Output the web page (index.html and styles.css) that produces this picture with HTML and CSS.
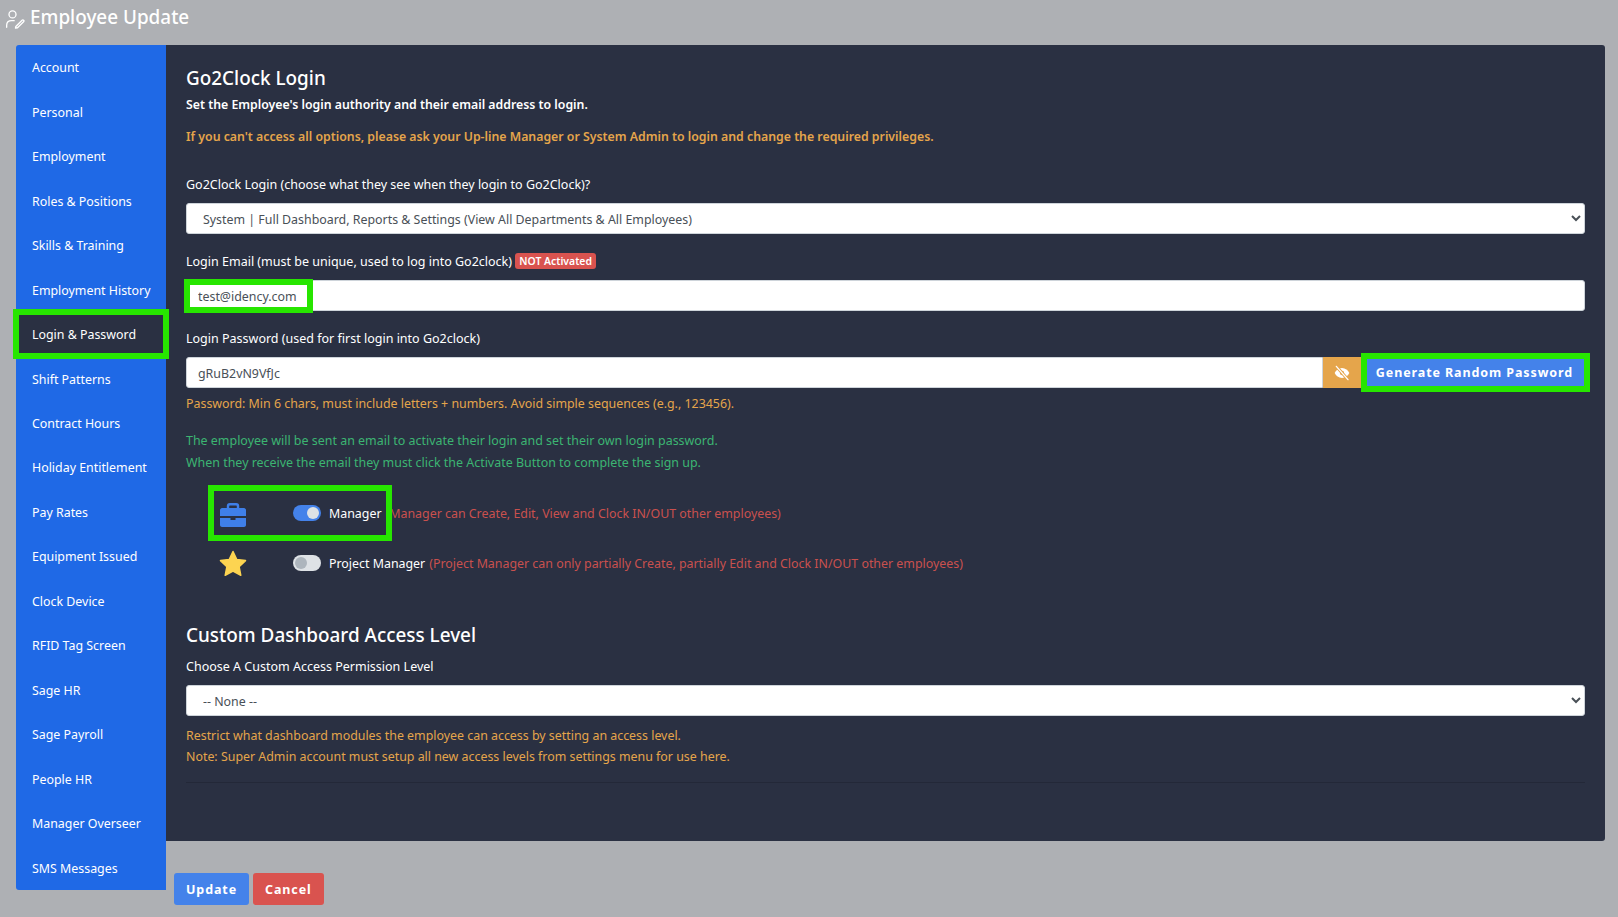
FILE: index.html
```html
<!DOCTYPE html>
<html lang="en">
<head>
    <meta charset="UTF-8">
    <title>Employee Update</title>
    <link rel="stylesheet" href="styles.css">
</head>
<body>
    <div class="page-title">
        <svg class="title-icon" viewBox="0 0 24 24" fill="none" stroke="#fff" stroke-width="1.6" stroke-linecap="round" stroke-linejoin="round">
            <circle cx="9" cy="6.5" r="4.2"/>
            <path d="M2 22v-2.5C2 16 4.5 14 8 14h3"/>
            <path d="M13 21l7.500-7.500c1.200-1.200 3 .6 1.800 1.800L15 22.500l-2.400.4z"/>
        </svg>
        <span>Employee Update</span>
    </div>

    <div class="layout">
        <div class="side-col">
            <ul class="side-nav">
                <li>Account</li>
                <li>Personal</li>
                <li>Employment</li>
                <li>Roles &amp; Positions</li>
                <li>Skills &amp; Training</li>
                <li>Employment History</li>
                <li class="active">Login &amp; Password</li>
                <li>Shift Patterns</li>
                <li>Contract Hours</li>
                <li>Holiday Entitlement</li>
                <li>Pay Rates</li>
                <li>Equipment Issued</li>
                <li>Clock Device</li>
                <li>RFID Tag Screen</li>
                <li>Sage HR</li>
                <li>Sage Payroll</li>
                <li>People HR</li>
                <li>Manager Overseer</li>
                <li>SMS Messages</li>
            </ul>
        </div>

        <div class="main-col">
            <div class="panel">
                <h2>Go2Clock Login</h2>
                <p class="intro">Set the Employee's login authority and their email address to login.</p>
                <p class="warn">If you can't access all options, please ask your Up-line Manager or System Admin to login and change the required privileges.</p>

                <label class="field-label first-label">Go2Clock Login (choose what they see when they login to Go2Clock)?</label>
                <select class="control">
                    <option>System | Full Dashboard, Reports &amp; Settings (View All Departments &amp; All Employees)</option>
                </select>

                <label class="field-label">Login Email (must be unique, used to log into Go2clock) <span class="badge">NOT Activated</span></label>
                <div class="email-wrap">
                    <input class="control" type="text" value="test@idency.com">
                    <span class="mark mark-email"></span>
                </div>

                <label class="field-label">Login Password (used for first login into Go2clock)</label>
                <div class="input-group">
                    <input class="control" type="text" value="gRuB2vN9VfJc">
                    <span class="eye-btn">
                        <svg viewBox="0 0 24 24" width="16" height="16" fill="#fff">
                            <path d="M12 4.500c-5 0-9 3.600-11 7.500 2 3.900 6 7.500 11 7.500s9-3.600 11-7.500c-2-3.900-6-7.500-11-7.500z"/>
                            <circle cx="12" cy="12" r="3.200" fill="#e5a54b"/>
                            <path d="M4 2.500L20.500 21.500" stroke="#e5a54b" stroke-width="4.500"/>
                            <path d="M3.500 2L21 22" stroke="#fff" stroke-width="2" stroke-linecap="round"/>
                        </svg>
                    </span>
                    <button class="btn btn-blue gen-btn" type="button">Generate Random Password</button>
                </div>
                <p class="help-orange pw-help">Password: Min 6 chars, must include letters + numbers. Avoid simple sequences (e.g., 123456).</p>

                <p class="help-green">The employee will be sent an email to activate their login and set their own login password.<br>When they receive the email they must click the Activate Button to complete the sign up.</p>

                <div class="perm-row manager-row">
                    <span class="perm-icon briefcase">
                        <svg viewBox="0 0 28 24" width="28" height="24">
                            <path d="M9 5V3c0-1 .8-1.800 1.800-1.800h6.400c1 0 1.800.8 1.800 1.800v2" fill="none" stroke="#3f7fe8" stroke-width="2.400"/>
                            <path d="M1 7c0-1 1-2 2-2h22c1 0 2 1 2 2v6H1z" fill="#3f7fe8"/>
                            <path d="M1 15h10.500v2h5v-2H27v7c0 1-1 2-2 2H3c-1 0-2-1-2-2z" fill="#3f7fe8"/>
                        </svg>
                    </span>
                    <span class="switch on"></span>
                    <span class="perm-name">Manager</span>
                    <span class="perm-note">(Manager can Create, Edit, View and Clock IN/OUT other employees)</span>
                    <span class="mark mark-manager"></span>
                </div>
                <div class="perm-row">
                    <span class="perm-icon">
                        <svg viewBox="0 0 28 27" width="28" height="27">
                            <path d="M14 1.500l3.800 8 8.700 1.100-6.400 6 1.700 8.700-7.800-4.300-7.800 4.300 1.700-8.700-6.400-6 8.700-1.100z" fill="#fdd451" stroke="#fdd451" stroke-width="1.500" stroke-linejoin="round"/>
                        </svg>
                    </span>
                    <span class="switch"></span>
                    <span class="perm-name">Project Manager</span>
                    <span class="perm-note">(Project Manager can only partially Create, partially Edit and Clock IN/OUT other employees)</span>
                </div>

                <h2 class="custom-head">Custom Dashboard Access Level</h2>
                <label class="field-label choose-label">Choose A Custom Access Permission Level</label>
                <select class="control">
                    <option>-- None --</option>
                </select>
                <p class="help-orange custom-help">Restrict what dashboard modules the employee can access by setting an access level.<br>Note: Super Admin account must setup all new access levels from settings menu for use here.</p>
                <hr>
            </div>
            <div class="actions">
                <button class="btn btn-blue" type="button">Update</button>
                <button class="btn btn-red" type="button">Cancel</button>
            </div>
        </div>
    </div>
</body>
</html>
```

FILE: styles.css
```css
body {
    font-family: "Noto Sans", Arial, sans-serif;
    font-size: 12.4px;
    margin: 0;
    height: 917px;
    overflow: hidden;
    background-color: #aeb0b4;
    color: #fff;
}

.page-title {
    display: flex;
    align-items: center;
    height: 45px;
    box-sizing: border-box;
    padding: 0 0 11px 5px;
    font-size: 18.9px;
    font-weight: 500;
}

.title-icon {
    width: 20px;
    height: 20px;
    margin-right: 5px;
    margin-top: 4px;
}

.layout {
    display: flex;
    padding-left: 16px;
    padding-right: 13px;
}

.side-col {
    width: 150px;
    flex-shrink: 0;
}

.side-nav {
    list-style: none;
    margin: 0;
    padding: 0;
    background-color: #1f69e6;
    border-radius: 3px 0 0 3px;
}

.side-nav li {
    display: flex;
    align-items: center;
    height: 44.47px;
    box-sizing: border-box;
    padding: 1px 0 0 16px;
}

.side-nav .active {
    background-color: #2a3042;
    outline: 6px solid #27e600;
    outline-offset: -3px;
    position: relative;
}

.main-col {
    flex: 1;
    min-width: 0;
}

.panel {
    height: 796px;
    box-sizing: border-box;
    padding: 20px 20px 0;
    background-color: #2a3042;
    border-radius: 0 3px 3px 0;
}

h2 {
    margin: 0;
    font-size: 18.9px;
    font-weight: 500;
    line-height: 26px;
}

p {
    margin: 0;
}

.intro {
    margin-top: 4px;
    font-size: 12.3px;
    font-weight: 600;
    line-height: 20px;
}

.warn {
    margin-top: 12px;
    font-size: 12.3px;
    font-weight: 600;
    line-height: 20px;
    color: #e5a54b;
}

.field-label {
    display: block;
    font-size: 12.5px;
    line-height: 20px;
    margin: 18px 0 8px;
}

.first-label {
    margin-top: 28px;
}

.badge {
    display: inline-block;
    padding: 1px 4px;
    font-size: 10.4px;
    font-weight: 600;
    line-height: 14px;
    background-color: #d9534f;
    border-radius: 3px;
    vertical-align: 1px;
}

.control {
    display: block;
    width: 100%;
    height: 31px;
    box-sizing: border-box;
    padding: 1px 12px 0;
    font-family: inherit;
    font-size: 12.4px;
    color: #495057;
    background-color: #fff;
    border: 1px solid #ced4da;
    border-radius: 3px;
}

input.control {
    padding-left: 11px;
}

.email-wrap {
    position: relative;
}

.mark {
    position: absolute;
    border: 6px solid #27e600;
    box-sizing: border-box;
}

.mark-email {
    left: -2px;
    top: -1px;
    width: 129px;
    height: 34px;
}

.input-group {
    display: flex;
    align-items: stretch;
}

.input-group .control {
    flex: 1;
    min-width: 0;
    border-radius: 3px 0 0 3px;
}

.eye-btn {
    display: flex;
    align-items: center;
    justify-content: center;
    width: 38px;
    background-color: #e5a54b;
}

.btn {
    font-family: inherit;
    font-size: 12.5px;
    font-weight: 700;
    letter-spacing: 0.9px;
    color: #fff;
    border: none;
    border-radius: 3px;
    height: 32px;
    padding: 0 12px;
}

.btn-blue {
    background-color: #4482ea;
}

.btn-red {
    background-color: #d9534f;
}

.gen-btn {
    box-sizing: content-box;
    height: 27px;
    border: 6px solid #27e600;
    border-radius: 0;
    margin: -4px -5px -4px 0;
    padding: 0 11px 0 9px;
}

.help-orange {
    color: #e5a54b;
    line-height: 21px;
}

.pw-help {
    margin-top: 5px;
}

.help-green {
    margin-top: 16px;
    font-size: 12.45px;
    color: #3cb572;
    line-height: 22px;
}

.perm-row {
    display: flex;
    align-items: center;
    position: relative;
    height: 50px;
    padding-left: 33px;
}

.manager-row {
    margin-top: 14px;
}

.perm-icon {
    display: flex;
    justify-content: center;
    width: 28px;
    margin-right: 46px;
}

.briefcase {
    padding-top: 4px;
}

.switch {
    position: relative;
    width: 28px;
    height: 16px;
    box-sizing: border-box;
    margin-right: 8px;
    background-color: #dee2e6;
    border-radius: 8px;
}

.switch::after {
    content: "";
    position: absolute;
    left: 2px;
    top: 2px;
    width: 12px;
    height: 12px;
    border-radius: 50%;
    background-color: #adb5bd;
}

.switch.on {
    background-color: #4482ea;
}

.switch.on::after {
    left: 14px;
    background-color: #dee2e6;
}

.perm-name {
    margin-right: 4px;
}

.perm-note {
    color: #c9504e;
}

.mark-manager {
    left: 22px;
    top: -3px;
    width: 184px;
    height: 56px;
}

.custom-head {
    margin-top: 34px;
}

.choose-label {
    margin: 9px 0 8px;
}

.custom-help {
    margin-top: 9px;
}

hr {
    margin: 15px 0 0;
    border: none;
    border-top: 1px solid #232838;
}

.actions {
    display: flex;
    gap: 4px;
    padding: 32px 0 0 8px;
}
```
